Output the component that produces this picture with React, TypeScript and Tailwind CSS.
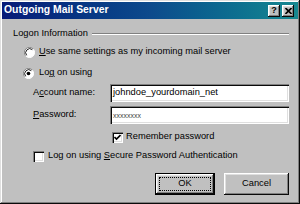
import React from "react"

const font = { fontFamily: '"Liberation Sans", Arial, sans-serif' }

function Radio({ checked }: { checked?: boolean }) {
  return (
    <svg width="11" height="11" viewBox="0 0 12 12" className="shrink-0">
      <circle cx="6" cy="6" r="5.5" fill="#ffffff" />
      <path d="M10.2 2.3 A5.5 5.5 0 0 0 1.8 9.7" fill="none" stroke="#808080" strokeWidth="1" />
      <path d="M9.1 2.9 A4.4 4.4 0 0 0 2.9 9.1" fill="none" stroke="#0a0a0a" strokeWidth="1" />
      <path d="M1.8 9.7 A5.5 5.5 0 0 0 10.2 2.3" fill="none" stroke="#ffffff" strokeWidth="1" />
      {checked && <circle cx="6" cy="6" r="2" fill="#000000" />}
    </svg>
  )
}

function Check({ checked }: { checked?: boolean }) {
  return (
    <div className="w-[11px] h-[11px] shrink-0 bg-white shadow-[inset_1px_1px_#808080,inset_2px_2px_#0a0a0a,inset_-1px_-1px_#ffffff,inset_-2px_-2px_#dfdfdf] flex items-center justify-center">
      {checked && (
        <svg width="7" height="7" viewBox="0 0 7 7">
          <path d="M0.5 3 L2.5 5 L6.5 1" fill="none" stroke="#000" strokeWidth="1.6" />
        </svg>
      )}
    </div>
  )
}

const sunken =
  "bg-white shadow-[inset_1px_1px_#808080,inset_2px_2px_#0a0a0a,inset_-1px_-1px_#ffffff,inset_-2px_-2px_#dfdfdf]"

const raised =
  "bg-[#c0c0c0] shadow-[inset_-1px_-1px_#0a0a0a,inset_1px_1px_#ffffff,inset_-2px_-2px_#808080,inset_2px_2px_#dfdfdf]"

export default function App() {
  return (
    <div
      style={font}
      className="w-[300px] h-[204px] bg-[#c0c0c0] p-[2px] text-black text-[9.3px] leading-none shadow-[inset_-1px_-1px_#0a0a0a,inset_1px_1px_#dfdfdf,inset_-2px_-2px_#808080,inset_2px_2px_#ffffff] flex flex-col"
    >
      {/* TITLE BAR */}
      <div className="h-[17px] flex items-center justify-between pl-[2px] pr-[4px] bg-gradient-to-r from-[#081a78] via-[#0d4a8c] to-[#178890]">
        <span className="text-white font-bold text-[10.4px]">Outgoing Mail Server</span>
        <div className="flex gap-[2px]">
          <div className={`w-[12px] h-[12px] ${raised} flex items-center justify-center font-bold text-[9px]`}>?</div>
          <div className={`w-[12px] h-[12px] ${raised} flex items-center justify-center`}>
            <svg width="7" height="6" viewBox="0 0 7 6">
              <path d="M0.5 0 L6.5 6 M6.5 0 L0.5 6" stroke="#000" strokeWidth="1.6" />
            </svg>
          </div>
        </div>
      </div>

      {/* GROUP HEADING */}
      <div className="mt-[10px] h-[10px] flex items-center pl-[11px] pr-[9px] gap-[4px]">
        <span>Logon Information</span>
        <div className="flex-1 h-[2px] border-t border-t-[#808080] border-b border-b-white" />
      </div>

      <div className="mt-[7px] h-[12px] flex items-center pl-[22px] gap-[4px]">
        <Radio />
        <span>
          <span className="underline">U</span>se same settings as my incoming mail server
        </span>
      </div>

      <div className="mt-[9px] h-[12px] flex items-center pl-[21px] gap-[5px]">
        <Radio checked />
        <span>
          Lo<span className="underline">g</span> on using
        </span>
      </div>

      <div className="mt-[5px] h-[18px] flex items-center pl-[31px] pr-[9px]">
        <span className="w-[77px]">
          A<span className="underline">c</span>count name:
        </span>
        <div className={`flex-1 h-[18px] ${sunken} flex items-center pl-[3px]`}>johndoe_yourdomain_net</div>
      </div>

      <div className="mt-[4px] h-[18px] flex items-center pl-[31px] pr-[9px]">
        <span className="w-[77px]">
          <span className="underline">P</span>assword:
        </span>
        <div className={`flex-1 h-[18px] ${sunken} flex items-center pl-[3px] text-[7px] text-[#444]`}>xxxxxxxx</div>
      </div>

      <div className="mt-[7px] h-[12px] flex items-center pl-[110px] gap-[3px]">
        <Check checked />
        <span>Remember password</span>
      </div>

      <div className="mt-[7px] h-[12px] flex items-center pl-[31px] gap-[4px]">
        <Check />
        <span>
          Log on using <span className="underline">S</span>ecure Password Authentication
        </span>
      </div>

      {/* BUTTONS */}
      <div className="mt-[11px] flex justify-end gap-[9px] pr-[9px]">
        <div className="w-[60px] h-[22px] border border-black">
          <div className={`w-full h-full ${raised} p-[3px]`}>
            <div className="w-full h-full border border-dotted border-black flex items-center justify-center">OK</div>
          </div>
        </div>
        <div className={`w-[65px] h-[22px] ${raised} flex items-center justify-center`}>Cancel</div>
      </div>
    </div>
  )
}
